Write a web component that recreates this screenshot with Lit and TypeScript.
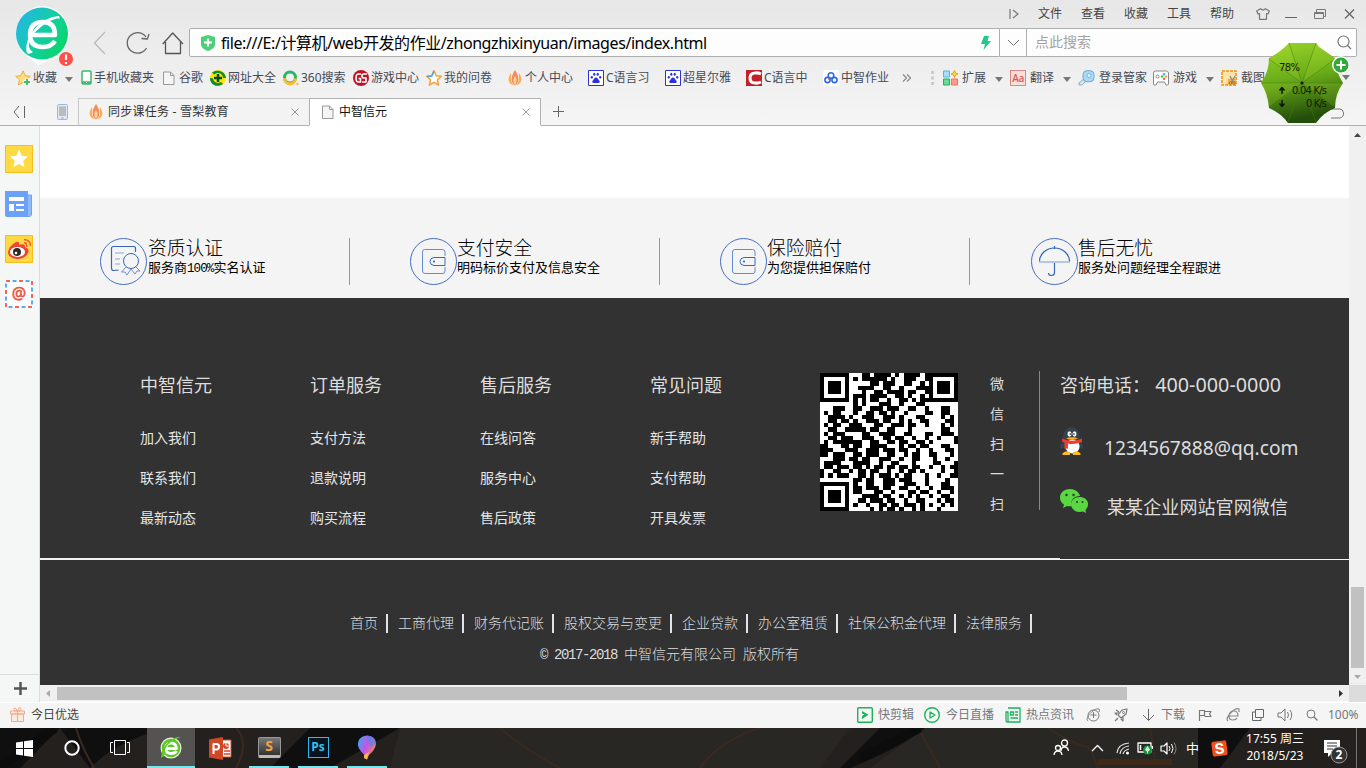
import { LitElement, html, css, svg } from "lit";
import { customElement } from "lit/decorators.js";

// Small glyphs, each drawn in its own pixel box.
const box = (w: number, h: number, body: unknown) =>
  html`<svg width=${w} height=${h} viewBox="0 0 ${w} ${h}" fill="none" stroke-linejoin="round">${body}</svg>`;

const caret = () => box(8, 5, svg`<path d="M0 0H8L4 5Z" fill="#777"/>`);
const flame = () => box(14, 16, svg`
  <path d="M3 3C-1 9 0 14 6 15.500C1 10 4 8 3 3ZM11 3C15 9 14 14 8 15.500C13 10 10 8 11 3Z" fill="#f9ae55"/>
  <path d="M7 0C11 6 12 12 7 15.500C2 12 3 6 7 0Z" fill="#f58a5b"/><path d="M7 6C9 9 9 12 7 15C5 12 5 9 7 6Z" fill="#fdd9a0"/>`);
const sheet = () => box(12, 14, svg`<path d="M.5 1H7.500L11 4.500V13.500H.5ZM7.500 1V4.500H11" stroke="#999" fill="#f5f5f5"/>`);
const paw = () => box(16, 16, svg`<rect x=".5" y=".5" width="15" height="15" fill="#fff" stroke="#2b33d8"/>
  <g fill="#2b33e0"><ellipse cx="3.800" cy="7.300" rx="1.100" ry="1.400"/><ellipse cx="6.300" cy="4.200" rx="1.100" ry="1.500"/><ellipse cx="9.700" cy="4.200" rx="1.100" ry="1.500"/><ellipse cx="12.200" cy="7.300" rx="1.100" ry="1.400"/><path d="M8 7.500C9.500 7.500 10 9 11.200 10.500C12.500 12.300 11.500 13.500 8 13C4.500 13.500 3.500 12.300 4.800 10.500C6 9 6.500 7.500 8 7.500Z"/></g>`);
const starPath = "M8 .8L10.200 5.700L15.300 6.300L11.500 9.800L12.600 15L8 12.300L3.400 15L4.500 9.800L.7 6.300L5.800 5.700Z";

const marks: { icon: unknown; label?: string; menu?: boolean; cls?: string }[] = [
  { icon: box(16, 16, svg`<path d=${starPath} fill="#ffdf7c" stroke="#f0ab3c"/><path d="M12 8.500V15.500M8.500 12H15.500" stroke="#fff" stroke-width="4"/><path d="M12 9V15M9 12H15" stroke="#3fbd70" stroke-width="2"/>`), label: "收藏", menu: true },
  { icon: box(11, 15, svg`<rect x="1" y="1" width="9" height="13" rx="1" fill="#fff" stroke="#3eb871" stroke-width="1.500"/><path d="M1 12.500H10" stroke="#3eb871" stroke-width="2.500"/><path d="M5 12.500H6" stroke="#fff"/>`), label: "手机收藏夹" },
  { icon: sheet(), label: "谷歌", cls: "wider" },
  { icon: box(16, 16, svg`<circle cx="8" cy="8" r="8" fill="#ffe500"/><path d="M2 2.500C7-1 15 1 16 8L8 8L2 2.500M0 8C0 15 7 18 13 14L8 9Z" fill="#128a30"/><circle cx="8" cy="8" r="5" fill="#f6e800"/><path d="M8 4V12M4 8H12" stroke="#064b1c" stroke-width="2.500"/>`), label: "网址大全" },
  { icon: box(16, 16, svg`<circle cx="7" cy="7.500" r="5.500" stroke="#27b867" stroke-width="3"/><path d="M1.500 8A5.500 5.500 0 0 0 12.500 8.500" stroke="#f8bd31" stroke-width="3"/><circle cx="14.500" cy="14" r="1.200" fill="#f8bd31"/>`), label: "360搜索" },
  { icon: box(16, 16, svg`<circle cx="8" cy="8" r="8" fill="#bd1425"/><path d="M8 4H5.500Q3 4 3 8T5.500 12H7.500V8.500H5.500M14 4H10.500Q9 4 9 6T10.500 8H13V12H9" stroke="#fff" stroke-width="1.600"/>`), label: "游戏中心" },
  { icon: box(16, 16, svg`<path d=${starPath} fill="#fff" stroke="#f4a236" stroke-width="1.500"/><path d="M1 6.500L5.800 6L8 1" stroke="#45a9ef" stroke-width="1.600"/>`), label: "我的问卷" },
  { icon: flame(), label: "个人中心", cls: "wide" },
  { icon: paw(), label: "C语言习" },
  { icon: paw(), label: "超星尔雅" },
  { icon: box(16, 16, svg`<path d="M0 0H16V16H0Z" fill="#c3202a"/><path d="M15 4Q12 2.500 9 3Q4 3 4 8T9 13Q12 13.500 15 12" stroke="#fff" stroke-width="3"/>`), label: "C语言中" },
  { icon: box(16, 16, svg`<rect width="16" height="16" rx="3" fill="#fff"/><circle cx="8" cy="5.500" r="2.800" stroke="#2d6ce8" stroke-width="1.600"/><circle cx="4.500" cy="10" r="2.600" stroke="#2d6ce8" stroke-width="1.600"/><circle cx="11.500" cy="10" r="2.600" stroke="#2d6ce8" stroke-width="1.600"/><path d="M5.500 8.500L7.500 10" stroke="#e84338" stroke-width="1.600"/>`), label: "中智作业" },
  { icon: box(10, 10, svg`<path d="M1 1.500L4.500 5L1 8.500M5 1.500L8.500 5L5 8.500" stroke="#888" stroke-width="1.200"/>`) },
  { icon: box(3, 14, svg`<path d="M1.500 0V3M1.500 5.500V8.500M1.500 11V14" stroke="#c4c4c4" stroke-width="2.500"/>`) },
  { icon: box(16, 16, svg`<path d="M.5 1H6.500V7H.5Z" fill="#a9ddf9" stroke="#4db4ee"/><path d="M.5 9H6.500V15H.5Z" fill="#68db96" stroke="#20b35a"/><path d="M8.500 9H14.500V15H8.500Z" fill="#ff9d8a" stroke="#f17161"/><path d="M11.500 .5L12.700 3L15 4L12.700 5L11.500 7.500L10.300 5L8 4L10.300 3Z" fill="#ffdb39" stroke="#e2a31b"/>`), label: "扩展", menu: true, cls: "wide ext" },
  { icon: html`<span class="aa">Aa</span>`, label: "翻译", menu: true, cls: "wider" },
  { icon: box(17, 16, svg`<path d="M7 8L1 13V15H4L9 10" fill="#d8e8f0" stroke="#8aa8ba"/><rect x="5" y=".7" width="11" height="11" rx="4" fill="#a9d9f7" stroke="#6aaad2"/><circle cx="11" cy="5.500" r="2" fill="#e4f5ff" stroke="#78b4da"/>`), label: "登录管家", cls: "wider" },
  { icon: box(16, 16, svg`<path d="M2.500 1H13.500Q15 1 15.500 3V14Q15 15.500 13 15L11.500 12H4.500L3 15Q.5 15.500 .5 14V3Q.5 1 2.500 1Z" fill="#fff" stroke="#888"/><circle cx="4.500" cy="6.500" r="1.500" stroke="#888"/><circle cx="11" cy="4.300" r="1.200" fill="#42aef1"/><circle cx="13" cy="6.500" r="1.200" fill="#ffa734"/><circle cx="9" cy="6.500" r="1.200" fill="#42bd69"/><circle cx="11" cy="8.700" r="1.200" fill="#f15b52"/>`), label: "游戏", menu: true, cls: "wider" },
  { icon: box(16, 16, svg`<rect x="1" y="1" width="14" height="14" fill="#ffe3a8" stroke="#efa63d" stroke-width="2" stroke-dasharray="3 1"/><path d="M7 15V9L15 8V15Z" fill="#f0b050"/><path d="M9 6L12 12M14 6L10.500 12" stroke="#888" stroke-width="1.200"/><circle cx="9.500" cy="13" r="1.300" stroke="#b86d1f"/><circle cx="13" cy="13" r="1.300" stroke="#b86d1f"/>`), label: "截图", cls: "wider" },
  { icon: caret() },
];

const ring = svg`<circle cx="23.500" cy="23.500" r="23" stroke="#456fc0"/>`;
const wallet = () => box(47, 47, svg`${ring}<path d="M35 18V14Q35 11.500 32.500 11.500H14.500Q12.500 11.500 12.500 14V33Q12.500 35.500 15 35.500H33Q35 35.500 35 33V29" stroke="#638dd2"/><path d="M35 19.500H24Q20 20 20 23.500T24 27.500H35Z" stroke="#356ac2"/><circle cx="24" cy="23.500" r="1" fill="#245bb9"/>`);
const features = [
  { title: "资质认证", note: html`服务商<span class="half">100%</span>实名认证`, icon: box(47, 47, svg`${ring}<path d="M35.500 14V10.500Q35.500 8.500 33.500 8.500H13.500Q11.500 8.500 11.500 10.500V30Q11.500 32.500 13.500 32.500H18" stroke="#3767bc" stroke-width="1.200"/><path d="M15 15H24M15 21H20M15 26H20M15 32H19" stroke="#89a5d6"/><circle cx="31" cy="23" r="7.500" stroke="#3767bc"/><path d="M26 29L21.500 34L25 34L27 37L31 31L35 36L37 33H40L35 28" stroke="#6d91d0"/>`) },
  { title: "支付安全", note: "明码标价支付及信息安全", icon: wallet() },
  { title: "保险赔付", note: "为您提供担保赔付", icon: wallet() },
  { title: "售后无忧", note: "服务处问题经理全程跟进", icon: box(47, 47, svg`${ring}<path d="M8.500 23.500A15 13.500 0 0 1 38.500 23.500" stroke="#2e64bd" stroke-width="1.200"/><path d="M8 24H39" stroke="#a0b8e2" stroke-width="1.500"/><path d="M23.500 8V11M23.500 25V34.500Q23.500 37.500 20.500 37.500T17.500 35" stroke="#3767bc" stroke-width="1.200"/>`) },
];

const columns = [
  ["中智信元", "加入我们", "联系我们", "最新动态"],
  ["订单服务", "支付方法", "退款说明", "购买流程"],
  ["售后服务", "在线问答", "服务中心", "售后政策"],
  ["常见问题", "新手帮助", "支付帮助", "开具发票"],
];
const links = ["首页", "工商代理", "财务代记账", "股权交易与变更", "企业贷款", "办公室租赁", "社保公积金代理", "法律服务"];

const code = [
  "111111100011011110101111010111111",
  "100000101011111101001110010100001",
  "101110100000110111001100100101110",
  "101110100111100110010001110101110",
  "101110100010011011110110010101110",
  "100000101110111100110100100100001",
  "111111101010110010011010110111111",
  "000000001010001110010001100000000",
  "000111001100111011100110010001100",
  "010110001001101101001000011001100",
  "001111010011100111010001100001010",
  "001101101001110110010100110000110",
  "010110011100011001110110010001010",
  "001100111110110011000100000001100",
  "010111000011001111001100011001110",
  "001101110011100110110010010010001",
  "010111111100110011011001101000001",
  "110001101100111100010110110001100",
  "111000111001110111011001001000110",
  "110111001101110011001011001100010",
  "000111011011001110010011000100100",
  "011110001111001001100010000110001",
  "011011101101011011011011001001011",
  "100110010110110010010110100001001",
  "101011100110101110101100010010011",
  "000000001101100111011100010000100",
  "111111101001100111001110010001100",
  "100000101101110110011001001001110",
  "101110101100011001000110110010010",
  "101110100011110110010101001001100",
  "101110100110111011001001100010110",
  "100000101001001101101110101001010",
  "111111100000101011010010100010000",
];
const qr = () => html`<svg class="qr" width="138" height="138" viewBox="0 0 33 33" shape-rendering="crispEdges">
  <rect width="33" height="33" fill="#fff"/>
  <path fill="#000" d=${code.flatMap((r, y) => [...r].map((c, x) => {
    // Finder squares in three corners override the data modules.
    const fx = x > 25 ? x - 26 : x, fy = y > 25 ? y - 26 : y;
    const inFinder = fx < 7 && fy < 7 && !(x > 25 && y > 25);
    const d = Math.max(Math.abs(fx - 3), Math.abs(fy - 3));
    const on = inFinder && (x < 7 || x > 25) && (y < 7 || y > 25) ? d !== 2 : c === "1";
    return on ? `M${x} ${y}h1v1h-1z` : "";
  })).join("")}/></svg>`;

const qq = () => box(24, 29, svg`<path d="M2 15Q-1 19 1 22L4 20M21 15Q25 19 22 22L19 20" fill="#34434d"/><ellipse cx="11.500" cy="10" rx="8.500" ry="10" fill="#34434d"/><ellipse cx="12" cy="18" rx="9" ry="8.500" fill="#34434d"/><ellipse cx="12.500" cy="19.500" rx="7" ry="7" fill="#fff"/><path d="M2 11.500Q12 16 22 11.500V15Q14 18 8 16.500V21.500H4.500V15.500L2 14.500Z" fill="#f33b32"/><ellipse cx="9.500" cy="7" rx="2" ry="2.700" fill="#fff"/><ellipse cx="14.500" cy="7" rx="2" ry="2.700" fill="#fff"/><circle cx="10.200" cy="7" r=".8" fill="#111"/><circle cx="14" cy="7" r=".8" fill="#111"/><path d="M6 11.500Q12 9 18 11.500Q12 14 6 11.500Z" fill="#ffb51c"/><path d="M2 27Q5 23 10 25L10 28H3ZM21 27Q18 23 13 25L13 28H20Z" fill="#ffbc20"/>`);
const wechat = () => box(28, 24, svg`<path d="M10 0C4 0 0 4 0 8.500Q0 13 4 15.500L3 19L7 17Q9 17.500 11.500 17C10 11 14 7 20 7C19 3 15 0 10 0Z" fill="#59d842"/><path d="M19.500 8C14.500 8 11 11.500 11 15.500S15 23 19.500 23L23 22.500L26 24L25.500 21C31 15 27 8 19.500 8Z" fill="#59d842"/><g fill="#323232"><circle cx="6.500" cy="6" r="1.200"/><circle cx="13.500" cy="6" r="1.200"/><circle cx="17" cy="13" r="1"/><circle cx="22.500" cy="13" r="1"/></g>`);

const statusItems: { icon: unknown; label?: string }[] = [
  { icon: box(16, 16, svg`<rect x=".7" y=".7" width="14.600" height="14.600" rx="1" stroke="#19b45b" stroke-width="1.400"/><path d="M5 4V6.500L7.500 7.500L5 9V12L11.500 7.800Z" fill="#19b45b"/>`), label: "快剪辑" },
  { icon: box(16, 16, svg`<circle cx="8" cy="8" r="7.300" stroke="#19b45b" stroke-width="1.400"/><path d="M6 5L11 8L6 11Z" stroke="#19b45b" stroke-width="1.300"/>`), label: "今日直播" },
  { icon: box(16, 16, svg`<path d="M3 1H15V15H2Q1 15 1 13V5H3V15M5.500 5H8.500V8H5.500ZM10 5H13M10 8H13M5.500 11H13" stroke="#19b45b" stroke-width="1.300"/>`), label: "热点资讯" },
  { icon: box(15, 14, svg`<circle cx="7.500" cy="7.500" r="5.500" stroke="#777"/><path d="M2 13C-2 10 9-1 13 1Q14 2 13 4M7.500 4V10M4.500 7H10.500" stroke="#777"/>`) },
  { icon: box(14, 14, svg`<path d="M13 1L8 2L4 7L7 10L12 6ZM5 5L1 5L3 7M9 9L9 13L7 11M2 2L5 4M4 10L1 13" stroke="#777" stroke-width="1.200"/><circle cx="9.500" cy="4.500" r="1" stroke="#777"/>`) },
  { icon: box(13, 14, svg`<path d="M6.500 1V12M1 7L6.500 12.500L12 7" stroke="#666"/>`), label: "下载" },
  { icon: box(14, 14, svg`<path d="M1.500 13V2.500H6.500V7.500H1.500M6.500 3.500H13L11.500 6L13 8.500H6.500" stroke="#777" stroke-width="1.200"/>`) },
  { icon: box(14, 14, svg`<path d="M3 8H12Q12 3 8 3Q3 3 3 8Q3 12 7 12Q10 12 11 10M2 13C-2 10 9-1 13 1L13 4" stroke="#888" stroke-width="1.200"/>`) },
  { icon: box(12, 12, svg`<path d="M3.500 .5H11.500V8.500H3.500ZM3 3H.5V11.500H9V9" stroke="#666"/>`) },
  { icon: box(16, 14, svg`<path d="M1 5H4L8 1V13L4 9H1Z" stroke="#777"/><path d="M10.500 4Q12.500 7 10.500 10M13 2Q16.500 7 13 12" stroke="#777"/>`) },
  { icon: box(12, 12, svg`<circle cx="5" cy="5" r="4" stroke="#777"/><path d="M8 8L11.500 11.500" stroke="#777" stroke-width="1.300"/>`), label: "100%" },
];

const apps = [
  { cls: "", icon: box(17, 17, svg`<path d="M0 2.500L7 1.500V8H0ZM8 1.300L17 0V8H8ZM0 9H7V15.500L0 14.500ZM8 9H17V17L8 15.700Z" fill="#fff"/>`) },
  { cls: "", icon: box(16, 16, svg`<circle cx="8" cy="8" r="6.700" stroke="#fff" stroke-width="2"/>`) },
  { cls: "", icon: box(20, 16, svg`<path d="M4.500 .5H15.500V14.500H4.500ZM3 2.500H.5V12.500H3M17 2.500H19.500V12.500H17" stroke="#fff"/>`) },
  { cls: "active", icon: box(22, 23, svg`<circle cx="11" cy="12" r="10.500" fill="#e8f4dc"/><circle cx="11" cy="12" r="9.300" fill="#5fc32b"/><path d="M5.500 12.500H16.500Q16 7 11 7T5.500 12.500Q6 17.500 11 17.500Q15 17.500 16.500 15" stroke="#fff" stroke-width="2.800"/><path d="M1 22C2 7 14 0 21 1Q15 3 11 6Q4 11 4 20Z" fill="#5ccd25"/>`) },
  { cls: "", icon: box(23, 23, svg`<path d="M12 3H22V20H12Z" fill="#fff" stroke="#d24726"/><path d="M0 2.500L14 0V23L0 20.500Z" fill="#d24726"/><path d="M4.500 17V7H7.500Q10 7 10 9.700T7.500 12.500H5" stroke="#fff" stroke-width="2"/><circle cx="17" cy="9" r="3" fill="#d24726"/><path d="M17 5V9H21" stroke="#fff"/><path d="M15 14H21M15 17H21" stroke="#d24726" stroke-width="1.300"/>`) },
  { cls: "run", icon: html`<span class="sublime">S</span>` },
  { cls: "run", icon: html`<span class="ps">Ps</span>` },
  { cls: "run", icon: box(20, 25, svg`<defs><linearGradient id="k" x1="0" y1=".2" x2="1" y2=".7"><stop stop-color="#39a8f5"/><stop offset=".45" stop-color="#c254e8"/><stop offset="1" stop-color="#ff8a4d"/></linearGradient></defs><path d="M10 .5Q19 1 19 9Q18 15 12 20L10 24.500L7 23L7.500 20Q0 13 1 8Q2 1 10 .5Z" fill="url(#k)"/><path d="M7 20L12 17L10 24.500L7 23Z" fill="#f7b944"/><path d="M10 .5Q19 1 19 9L13 13Z" fill="#388ef0" opacity=".6"/>`) },
];

const tray = [
  box(17, 18, svg`<circle cx="11.500" cy="4" r="3" stroke="#fff" stroke-width="1.300"/><path d="M8 12Q8 8 11.500 8T15.500 12" stroke="#fff" stroke-width="1.300"/><circle cx="5" cy="9" r="2.500" stroke="#fff" stroke-width="1.300"/><path d="M1 16Q1.500 12 5 12T9 16" stroke="#fff" stroke-width="1.300"/>`),
  box(13, 8, svg`<path d="M1 7L6.500 1.500L12 7" stroke="#fff" stroke-width="1.300"/>`),
  box(14, 14, svg`<path d="M1 12Q2 3 13 2M4 13Q5 6 13 5M7 13Q8 9 13 8" stroke="#ddd" stroke-width="1.200"/><circle cx="11.500" cy="12" r="1.500" fill="#fff"/>`),
  box(16, 14, svg`<path d="M1 2H14V11H1Z" stroke="#fff" stroke-width="1.300"/><path d="M3.500 4V9M15.500 5V8" stroke="#fff" stroke-width="1.500"/><circle cx="10.500" cy="9" r="4.500" fill="#16963b"/><path d="M10.500 5.500L12.500 9L10.500 10.500L8.500 9ZM10.500 10V12.500" stroke="#fff" fill="#cfeac7" stroke-width=".7"/>`),
  box(17, 15, svg`<path d="M1 5H4L7 2V13L4 10H1Z" stroke="#fff" stroke-width="1.200"/><path d="M9 5Q11 7.500 9 10M11.500 3Q14.500 7.500 11.500 12" stroke="#fff"/><path d="M14 1.500Q18 7.500 14 13.500" stroke="#888"/>`),
];

@customElement("app-root")
export class AppRoot extends LitElement {
  static styles = css`
    :host { display: grid; grid-template-rows: 28px 29px 41px 28px 576px 26px 40px; width: 1366px; height: 768px; overflow: hidden; position: relative; font: 12px/16px "Noto Sans", "Noto Sans CJK SC", sans-serif; color: #444; background: linear-gradient(#e7e7e7, #f5f5f5 126px); }
    * { box-sizing: border-box; }
    svg { display: block; flex: none; }
    .title { display: grid; grid-template-columns: 29px repeat(4, 43px) 46px 29px 29px 30px 14px; padding-left: 1009px; align-items: center; height: 27px; }
    .address { display: grid; grid-template-columns: 33px 36px 27px 811px 27px 330px; padding-left: 93px; align-items: center; }
    .url, .drop, .search { height: 29px; border: 1px solid #aeaeae; background: #fdfdfd; display: flex; align-items: center; }
    .url { border-radius: 2px 0 0 2px; padding: 0 8px 0 11px; justify-content: space-between; color: #000; font: 16px/24px "Noto Sans", "Noto Sans CJK SC", sans-serif; }
    .url .path { display: flex; gap: 6px; align-items: center; letter-spacing: -0.42px; white-space: nowrap; }
    .drop { border-left: 0; justify-content: center; }
    .search { border-left: 0; border-radius: 0 2px 2px 0; padding: 0 4px 0 8px; justify-content: space-between; font-size: 14px; line-height: 24px; color: #a3a3a3; }
    .search span { margin-top: -2px; }
    .marks { display: grid; grid-template-columns: 66px 82px 47px 73px 70px 73px 82px 80px 77px 81px 77px 79px 29px 12px 67px 68px 75px 68px 121px 10px; padding-left: 15px; align-items: center; height: 41px; white-space: nowrap; color: #464a55; }
    .mark { display: flex; align-items: center; gap: 2px; }
    .mark.wide { gap: 3px; } .mark.wider { gap: 4px; }
    .mark .more { margin-left: 6px; padding-top: 3px; }
    .mark.wide .more { margin-left: 6px; } .mark.wider .more { margin-left: 5px; }
    .aa { width: 16px; height: 16px; border: 1px solid #dc8781; background: #fae0dc; color: #d85b55; font: 600 10px/14px "Open Sans", sans-serif; text-align: center; letter-spacing: -0.5px; }
    .tabs { display: grid; grid-template-columns: 57px 21px 231px 232px 1fr; align-items: center; border-bottom: 1px solid #b0b0b0; }
    .tabs > :first-child { margin-left: 13px; }
    .tab { height: 28px; border: 1px solid #c9c9c9; border-width: 1px 0 1px 1px; border-bottom-color: #b0b0b0; display: flex; align-items: center; gap: 5px; padding: 0 10px; color: #333; margin-bottom: -1px; background: #f3f3f3; align-self: start; }
    .tab span { flex: 1; letter-spacing: .25px; }
    .tab.on { background: #fff; border: 1px solid #b0b0b0; border-bottom-color: #fff; color: #111; padding-left: 12px; }
    .tab.on span { letter-spacing: 0; }
    .plus { margin-left: 12px; }
    .main { display: grid; grid-template-columns: 40px 1309px 17px; grid-template-rows: 559px 17px; }
    .side { grid-row: 1 / 3; background: #f5f7f6; border-right: 1px solid #dcdcdc; display: flex; flex-direction: column; gap: 17px; padding: 19px 0 0 5px; }
    .side .add { margin: auto 0 0 -5px; padding-left: 2px; height: 28px; border-top: 1px solid #ddd; display: grid; place-items: center; }
    .page { background: #fff; padding-top: 72px; overflow: hidden; }
    .features { height: 100px; background: #f4f4f4; display: grid; grid-template-columns: repeat(3, 250px) 260px; gap: 60px; padding: 40px 0 0 60px; }
    .feature { height: 47px; display: flex; border-right: 1px solid #999; color: #000; white-space: nowrap; }
    .feature:first-child { gap: 1px; }
    .feature:last-child { border: 0; padding-left: 1px; }
    .feature h3 { margin: -2px 0 0; font: 300 18.800px/22px "Noto Sans CJK SC", sans-serif; height: 22px; }
    .feature p { margin: 0; font: 13px/17px "Noto Sans CJK SC", sans-serif; }
    .half { font: 12.500px/13px "Liberation Mono", monospace; letter-spacing: -.9px; }
    .foot { height: 262px; background: #323232; display: grid; grid-template-columns: repeat(4, 170px) 170px 50px 1fr; padding: 73px 0 0 100px; color: #ddd; border-bottom: 2px solid #f2f2f2; }
    .col { font-size: 14px; line-height: 40px; }
    .col h4 { font-weight: 400; font-size: 18px; line-height: 28px; margin: 0 0 19px; }
    .col div { color: #e6e6e6; }
    .qr { margin-top: 2px; }
    .scan { border-right: 1px solid #888; height: 139px; font-size: 14px; line-height: 30px; }
    .scan span { display: block; width: 14px; margin-top: -2px; margin-bottom: 2px; }
    .contact { padding-left: 20px; font-size: 18px; line-height: 28px; white-space: nowrap; }
    .contact div { display: flex; align-items: center; }
    .num { font-size: 19.800px; }
    .mail .num { font-size: 19.200px; padding-top: 7px; }
    .contact .mail { height: 40px; margin-top: 28px; gap: 20px; align-items: flex-start; }
    .contact .wx { gap: 19px; height: 40px; margin-top: 22px; align-items: flex-start; }
    .wx span { padding-top: 4px; letter-spacing: .1px; }
    .legal { background: #323232; height: 125px; color: #ddd; font: 300 14px/20px "Noto Sans CJK SC", sans-serif; padding: 52px 0 0 310px; }
    .links { display: flex; gap: 10px; height: 20px; }
    .links span { height: 19px; line-height: 17px; padding-right: 8px; border-right: 2px solid #dfe5ea; margin-top: 2px; white-space: nowrap; }
    .copy { padding: 11px 0 0 190px; white-space: nowrap; }
    .copy i { font: 14px "Liberation Mono", monospace; letter-spacing: -1.4px; }
    .vbar { background: #f0f0f0; display: flex; flex-direction: column; align-items: center; padding: 7px 0 6px; }
    .vbar .thumb { width: 13px; height: 81px; background: #c1c1c1; margin: 450px 0 auto; }
    .hbar { background: #f0f0f0; display: flex; align-items: center; justify-content: space-between; padding: 0 6px; border-bottom: 1px solid #fafafa; }
    .hbar .thumb { width: 1070px; height: 13px; background: #c1c1c1; margin-right: auto; margin-left: 7px; }
    .corner { background: #dcdcdc; }
    .status { background: #f5f5f5; border-top: 1px solid #fff; display: grid; grid-template-columns: 847px 67px 81px 81px 28px 28px 56px 28px 26px 25px 29px 60px; padding: 0 0 2px 10px; align-items: center; color: #777; white-space: nowrap; }
    .status > div { display: flex; align-items: center; gap: 5px; }
    .status > div:nth-child(3), .status > div:nth-child(7) { gap: 6px; }
    .status > div:nth-child(12) { gap: 10px; }
    .status .today { color: #444; gap: 6px; }
    .task { background: #1d1b1a; overflow: hidden; display: flex; position: relative; }
    .wall { position: absolute; inset: 0; }
    .app { width: 48px; height: 40px; display: grid; place-items: center; position: relative; }
    .app.active { background: #555352; width: 48px; margin-left: 3px; border-bottom: 2px solid #73e7eb; }
    .app.active + .app { margin-left: 1px; }
    .app.run { width: 40px; margin-left: 5px; border-bottom: 2px solid #73e7eb; }
    .app.run + .run { margin-left: 9px; }
    .sublime { width: 23px; height: 21px; background: linear-gradient(#777, #333); border: 1px solid #999; border-bottom: 3px solid #bbb; border-radius: 2px; color: #f5a13c; font: bold 14px/16px "Open Sans", sans-serif; text-align: center; }
    .ps { width: 21px; height: 21px; border: 1px solid #31b7ee; background: #07131f; color: #35c1f2; font: bold 12px/18px "Open Sans", sans-serif; text-align: center; }
    .tray { position: relative; margin-left: auto; width: 313px; display: grid; grid-template-columns: 38px 25px 21px 23px 26px 26px 25px 81px 1fr; align-items: center; color: #fff; }
    .sogou { width: 15px; height: 15px; background: #f0501c; border-radius: 2px; transform: rotate(-7deg); font: bold 15px/15px "Inter", sans-serif; text-align: center; }
    .clock { line-height: 17px; text-align: center; width: 60px; white-space: nowrap; margin: -2px 0 0 8px; }
    .zh { font-size: 13px; }
    .logo { position: absolute; left: 13px; top: 5px; }
    .gadget { position: absolute; left: 1259px; top: 40px; }
    .gadget text { font: 10px "DejaVu Sans", sans-serif; fill: #102000; }
    .rule { width: 289px; height: 1px; background: #323232; margin: -2px 0 1px auto; }
  `;

  render() {
    return html`
      <div class="title">
        ${box(10, 12, svg`<path d="M1 1V11M4 2L9 6L4 10" stroke="#777" stroke-width="1.200"/>`)}
        <span>文件</span><span>查看</span><span>收藏</span><span>工具</span><span>帮助</span>
        ${box(14, 12, svg`<path d="M4.500 .7L.7 3L2 6L3.500 5.500V11.300H10.500V5.500L12 6L13.300 3L9.500 .7Q7 3 4.500 .7Z" stroke="#777" stroke-width="1.200"/>`)}
        ${box(13, 12, svg`<path d="M0 9.500H12" stroke="#666"/>`)}
        ${box(13, 12, svg`<path d="M.5 4.500H9.500V10.500H.5ZM.5 5.500H9.500M2.500 4V1.500H11.500V8.500H10" stroke="#777"/>`)}
        ${box(12, 12, svg`<path d="M1 1.500L10 10.500M10 1.500L1 10.500" stroke="#666" stroke-width="1.300"/>`)}
      </div>
      <div class="address">
        ${box(14, 24, svg`<path d="M12 1L1.500 12L12 23" stroke="#bbb" stroke-width="1.300"/>`)}
        ${box(24, 24, svg`<path d="M20 6A10.300 10.300 0 1 0 20.500 17M23 3L21.500 8L15.500 7.500" stroke="#666" stroke-width="1.300"/>`)}
        ${box(22, 24, svg`<path d="M.7 13L10.700 2L21 13M3.500 11V22.500H18.500V11" stroke="#555" stroke-width="1.300"/>`)}
        <div class="url"><div class="path">${box(14, 16, svg`<path d="M7 0L14 2V10Q13 14 7 16Q1 14 0 10V2Z" fill="#4bcf79"/><path d="M7 3.500V11.500M3 7.500H11" stroke="#fff" stroke-width="2.200"/>`)}<span>file:///E:/计算机/web开发的作业/zhongzhixinyuan/images/index.html</span></div>
          ${box(10, 14, svg`<path d="M3 0H8L6.500 5H10L2.500 14L4 8H0Z" fill="#22c98b"/>`)}</div>
        <div class="drop">${box(13, 8, svg`<path d="M1 1L6.500 6.500L12 1" stroke="#777"/>`)}</div>
        <div class="search"><span>点此搜索</span>${box(15, 15, svg`<circle cx="6.500" cy="6.500" r="5.500" stroke="#777" stroke-width="1.200"/><path d="M10.500 10.500L14 14" stroke="#777" stroke-width="1.200"/>`)}</div>
      </div>
      <div class="marks">${marks.map(m => html`<div class="mark ${m.cls ?? ""}">${m.icon}${m.label ? html`<span>${m.label}</span>` : ""}${m.menu ? html`<span class="more">${caret()}</span>` : ""}</div>`)}</div>
      <div class="tabs">
        ${box(13, 14, svg`<path d="M6 1L1 7L6 13M11.500 1V13" stroke="#666"/>`)}
        ${box(11, 16, svg`<rect x=".5" y=".5" width="10" height="15" rx="1" fill="#dce8f7" stroke="#9db7d8"/><path d="M2 2.500H9V12H2Z" fill="#bbb"/><path d="M4 14H7" stroke="#9db7d8"/>`)}
        <div class="tab">${flame()}<span>同步课任务 - 雪梨教育</span>${box(8, 8, svg`<path d="M.5 .5L7.500 7.500M7.500 .5L.5 7.500" stroke="#999"/>`)}</div>
        <div class="tab on">${sheet()}<span>中智信元</span>${box(8, 8, svg`<path d="M.5 .5L7.500 7.500M7.500 .5L.5 7.500" stroke="#999"/>`)}</div>
        <div class="plus">${box(11, 11, svg`<path d="M5.500 0V11M0 5.500H11" stroke="#666"/>`)}</div>
      </div>
      <div class="main">
        <div class="side">
          ${box(28, 28, svg`<rect x=".5" y=".5" width="27" height="27" fill="#ffda43" stroke="#f8bd18"/><path d="M14 4.500L16.700 10.800L23 11.500L18.200 15.800L19.500 22L14 19L8.500 22L9.800 15.800L5 11.500L11.300 10.800Z" fill="#fff"/>`)}
          ${box(28, 28, svg`<path d="M22 5H26.500V25L25 26.500H20Z" fill="#8fbcf8" stroke="#6fa3ed"/><path d="M0 1H23V27H2Q0 27 0 25Z" fill="#6ca1fa"/><path d="M4 7H19V11H4ZM4 14H9V21H4ZM11 14H19V16H11ZM11 19H19V21H11Z" fill="#fff"/>`)}
          ${box(28, 28, svg`<rect x=".5" y=".5" width="27" height="27" fill="#ffd943" stroke="#f8bd18"/><path d="M11 7Q15 6 14 10Q20 8 20 12Q25 14 23 18Q20 24 12 24Q3 23 3 17Q4 11 11 7Z" fill="#ed4639"/><ellipse cx="12.500" cy="17" rx="7.500" ry="5" fill="#fff"/><circle cx="12" cy="17" r="4" fill="#322923"/><circle cx="11" cy="18" r="1.300" fill="#fff"/><path d="M19 7.500Q22 8 22 12M19 4.500Q25.500 5 25.500 11" stroke="#f15b38" stroke-width="1.500"/>`)}
          ${box(28, 28, svg`<rect width="28" height="28" fill="#fff"/><rect x="1" y="1" width="26" height="26" stroke="#f36653" stroke-width="2" stroke-dasharray="4 9"/><rect x="1" y="1" width="26" height="26" stroke="#50aef4" stroke-width="2" stroke-dasharray="4 9" stroke-dashoffset="6.500"/><text x="14" y="19" font-size="16" stroke="#ee4e38" stroke-width=".5" text-anchor="middle" fill="#ee4e38" font-family="Noto Sans">@</text>`)}
          <div class="add">${box(13, 13, svg`<path d="M6.500 0V13M0 6.500H13" stroke="#555" stroke-width="2.500"/>`)}</div>
        </div>
        <div class="page">
          <div class="features">${features.map(f => html`<div class="feature">${f.icon}<div><h3>${f.title}</h3><p>${f.note}</p></div></div>`)}</div>
          <div class="foot">
            ${columns.map(([head, ...rest]) => html`<div class="col"><h4>${head}</h4>${rest.map(r => html`<div>${r}</div>`)}</div>`)}
            ${qr()}
            <div class="scan">${[..."微信扫一扫"].map(c => html`<span>${c}</span>`)}</div>
            <div class="contact">
              <div><span>咨询电话：</span><span class="num">&nbsp;400-000-0000</span></div>
              <div class="mail">${qq()}<span class="num">1234567888@qq.com</span></div>
              <div class="wx">${wechat()}<span>某某企业网站官网微信</span></div>
            </div>
          </div>
          <div class="rule"></div>
          <div class="legal">
            <div class="links">${links.map(l => html`<span>${l}</span>`)}</div>
            <div class="copy"><i>© 2017-2018 </i>中智信元有限公司<i> </i>版权所有</div>
          </div>
        </div>
        <div class="vbar">${box(7, 4, svg`<path d="M0 4L3.500 0L7 4Z" fill="#444"/>`)}<div class="thumb"></div>${box(7, 4, svg`<path d="M0 0L3.500 4L7 0Z" fill="#aaa"/>`)}</div>
        <div class="hbar">${box(4, 7, svg`<path d="M4 0L0 3.500L4 7Z" fill="#aaa"/>`)}<div class="thumb"></div>${box(4, 7, svg`<path d="M0 0L4 3.500L0 7Z" fill="#333"/>`)}</div>
        <div class="corner"></div>
      </div>
      <div class="status">
        <div class="today">${box(15, 15, svg`<path d="M.5 4H14.500V7H.5ZM1.500 7H13.500V14.500H1.500ZM7.500 4V14.500M7 4Q3 4 4 1.500Q6 0 7.500 4Q9-1 11 1.500Q12 4 8 4" fill="#fdebdf" stroke="#f2aa88"/>`)}<span>今日优选</span></div>
        ${statusItems.map(s => html`<div>${s.icon}${s.label ? html`<span>${s.label}</span>` : ""}</div>`)}
      </div>
      <div class="task">
        <svg class="wall" width="1366" height="40" viewBox="0 0 1366 40" fill="none"><rect width="1366" height="40" fill="#23201e"/>
          <path d="M0 0H60L20 40H0ZM90 40Q120 10 170 0H60ZM270 40L310 0H400L330 40ZM850 40Q900 20 925 0H880L840 40ZM1198 0H1250L1220 40H1198Z" fill="#100f0f"/>
          <path d="M400 0H850L820 40H390ZM925 0H1198V40H870Z" fill="#292723"/><path d="M76 0Q82 20 94 40M236 0Q250 15 236 40M500 0Q530 25 560 40M760 0Q720 12 700 40M918 0Q930 20 940 40M1048 0Q1070 15 1090 20L1098 40M1150 0L1155 30" stroke="#3a2921" stroke-width="2"/>
          <path d="M1098 34H1172" stroke="#3f2a17" stroke-width="6"/><path d="M0 39Q20 25 55 0M860 30L920 0" stroke="#0c0c0c" stroke-width="9"/></svg>
        ${apps.map(a => html`<div class="app ${a.cls}">${a.icon}</div>`)}
        <div class="tray">${tray}<span class="zh">中</span><span class="sogou">S</span><div class="clock">17:55 周三<br>2018/5/23</div>
          ${box(44, 40, svg`<path d="M6 12H22V25H14L10 29V25H6Z" fill="#fff"/><path d="M9 15H19M9 18H19M9 21H15" stroke="#333"/><circle cx="21" cy="27" r="8" fill="#333" stroke="#999"/><text x="21" y="31" fill="#fff" font-size="12" font-weight="bold" text-anchor="middle">2</text><path d="M38.500 0V40" stroke="#777"/>`)}
        </div>
      </div>
      <div class="logo">${box(62, 62, svg`<defs><linearGradient id="lg" x1="0" y1=".2" x2="1" y2=".8"><stop stop-color="#24b7e6"/><stop offset=".5" stop-color="#14cda5"/><stop offset="1" stop-color="#06d85f"/></linearGradient></defs>
        <path d="M29 1A28 28 0 0 1 41 54L25 60L15 52A28 28 0 0 1 29 1Z" fill="#fafafa"/><circle cx="29" cy="28.500" r="26" fill="url(#lg)"/>
        <path d="M18 30H42Q42 17 30 17Q17 17 17 30Q17 42 30 42Q38 42 42 36" stroke="#fff" stroke-width="4.500"/><path d="M14 48C10 33 27 12 46 11L47 14C43 11 24 22 18 33Q13 43 20 47Q16 50 14 48Z" fill="#fff"/><circle cx="53" cy="54" r="7" fill="#fb5148"/><path d="M53 49.500V55M53 57V59" stroke="#fff" stroke-width="2.200"/>`)}</div>
      <div class="gadget">${box(107, 86, svg`<defs><linearGradient id="um" x1="0" y1="0" x2=".2" y2="1"><stop stop-color="#9bd529"/><stop offset=".5" stop-color="#69ac19"/><stop offset="1" stop-color="#234e0a"/></linearGradient></defs>
        <path d="M72 69H81Q84 69 84.500 73T81 78H72" stroke="#777"/><path d="M30 3H57L60 7L76 18Q76 30 84 43Q76 54 76 68Q65 72 57 83H29Q22 73 10 68Q9 54 2 43Q10 32 10 18Q22 12 30 3Z" fill="url(#um)"/>
        <path d="M43 43L57 3L76 19ZM43 43L30 3L10 19ZM43 43L3 43L10 67ZM43 43L83 43L76 67Z" fill="#bde735" opacity=".16"/>
        <path d="M43 43L30 3M43 43L57 3M43 43L76 19M43 43L84 43M43 43L76 67M43 43L57 82M43 43L29 82M43 43L10 67M43 43L3 43M43 43L10 19" stroke="#467e12" opacity=".5"/><circle cx="43" cy="43" r="1.500" fill="#170b06"/>
        <text x="20" y="31" textLength="21">78%</text><text x="33" y="54" textLength="35">0.04 K/s</text><text x="47" y="67" textLength="21">0 K/s</text>
        <path d="M23 54V48M20.500 50.500L23 47.500L25.500 50.500M23 60V66M20.500 63.500L23 66.500L25.500 63.500" stroke="#111" stroke-width="1.500"/>
        <circle cx="82" cy="25" r="9" fill="#fff"/><circle cx="82" cy="25" r="7.500" fill="#31a83a"/><path d="M82 20.500V29.500M77.500 25H86.500" stroke="#fff" stroke-width="2"/>`)}</div>
    `;
  }
}
